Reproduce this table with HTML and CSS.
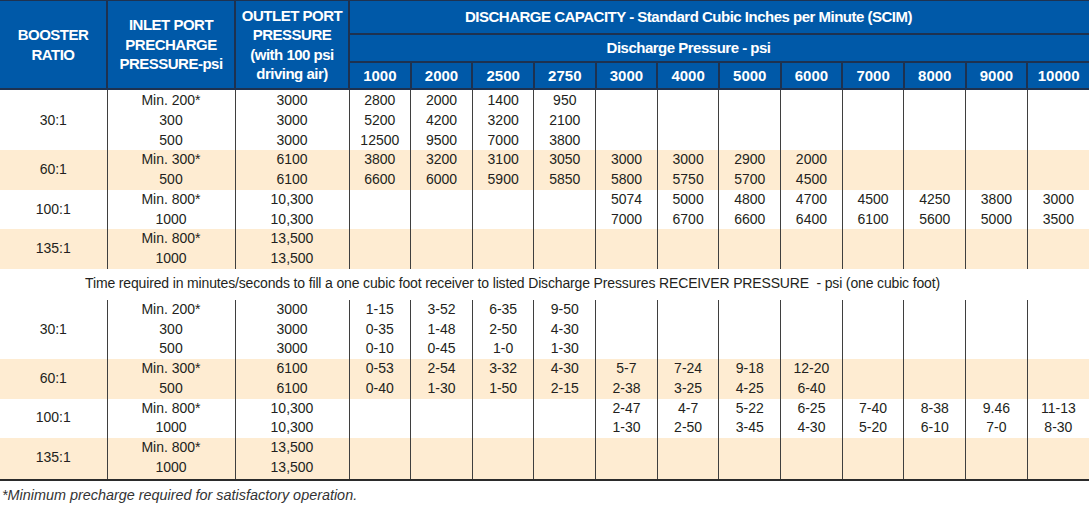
FILE: index.html
```html
<!DOCTYPE html>
<html>
<head>
<meta charset="utf-8">
<link rel="stylesheet" href="styles.css">
</head>
<body>
<table class="spec">
  <colgroup>
    <col class="c-ratio"><col class="c-inlet"><col class="c-outlet">
    <col class="c-p"><col class="c-p"><col class="c-p"><col class="c-p"><col class="c-p"><col class="c-p">
    <col class="c-p"><col class="c-p"><col class="c-p"><col class="c-p"><col class="c-p"><col class="c-p">
  </colgroup>
  <thead>
    <tr class="h1">
      <th rowspan="3" class="first">BOOSTER<br>RATIO</th>
      <th rowspan="3">INLET PORT<br>PRECHARGE<br>PRESSURE-psi</th>
      <th rowspan="3">OUTLET PORT<br>PRESSURE<br>(with 100 psi<br>driving air)</th>
      <th colspan="12" class="span">DISCHARGE CAPACITY - Standard Cubic Inches per Minute (SCIM)</th>
    </tr>
    <tr class="h2">
      <th colspan="12" class="span">Discharge Pressure - psi</th>
    </tr>
    <tr class="h3">
      <th>1000</th><th>2000</th><th>2500</th><th>2750</th><th>3000</th><th>4000</th>
      <th>5000</th><th>6000</th><th>7000</th><th>8000</th><th>9000</th><th>10000</th>
    </tr>
  </thead>
  <tbody>
    <tr class="w top">
      <td class="ratio">30:1</td>
      <td>Min. 200*<br>300<br>500</td>
      <td>3000<br>3000<br>3000</td>
      <td>2800<br>5200<br>12500</td>
      <td>2000<br>4200<br>9500</td>
      <td>1400<br>3200<br>7000</td>
      <td>950<br>2100<br>3800</td>
      <td></td><td></td><td></td><td></td><td></td><td></td><td></td><td></td>
    </tr>
    <tr class="b">
      <td class="ratio">60:1</td>
      <td>Min. 300*<br>500</td>
      <td>6100<br>6100</td>
      <td>3800<br>6600</td>
      <td>3200<br>6000</td>
      <td>3100<br>5900</td>
      <td>3050<br>5850</td>
      <td>3000<br>5800</td>
      <td>3000<br>5750</td>
      <td>2900<br>5700</td>
      <td>2000<br>4500</td>
      <td></td><td></td><td></td><td></td>
    </tr>
    <tr class="w">
      <td class="ratio">100:1</td>
      <td>Min. 800*<br>1000</td>
      <td>10,300<br>10,300</td>
      <td></td><td></td><td></td><td></td>
      <td>5074<br>7000</td>
      <td>5000<br>6700</td>
      <td>4800<br>6600</td>
      <td>4700<br>6400</td>
      <td>4500<br>6100</td>
      <td>4250<br>5600</td>
      <td>3800<br>5000</td>
      <td>3000<br>3500</td>
    </tr>
    <tr class="b">
      <td class="ratio">135:1</td>
      <td>Min. 800*<br>1000</td>
      <td>13,500<br>13,500</td>
      <td></td><td></td><td></td><td></td><td></td><td></td><td></td><td></td><td></td><td></td><td></td><td></td>
    </tr>
    <tr class="caption">
      <td colspan="15">Time required in minutes/seconds to fill a one cubic foot receiver to listed Discharge Pressures RECEIVER PRESSURE&nbsp; - psi (one cubic foot)</td>
    </tr>
    <tr class="w">
      <td class="ratio">30:1</td>
      <td>Min. 200*<br>300<br>500</td>
      <td>3000<br>3000<br>3000</td>
      <td>1-15<br>0-35<br>0-10</td>
      <td>3-52<br>1-48<br>0-45</td>
      <td>6-35<br>2-50<br>1-0</td>
      <td>9-50<br>4-30<br>1-30</td>
      <td></td><td></td><td></td><td></td><td></td><td></td><td></td><td></td>
    </tr>
    <tr class="b">
      <td class="ratio">60:1</td>
      <td>Min. 300*<br>500</td>
      <td>6100<br>6100</td>
      <td>0-53<br>0-40</td>
      <td>2-54<br>1-30</td>
      <td>3-32<br>1-50</td>
      <td>4-30<br>2-15</td>
      <td>5-7<br>2-38</td>
      <td>7-24<br>3-25</td>
      <td>9-18<br>4-25</td>
      <td>12-20<br>6-40</td>
      <td></td><td></td><td></td><td></td>
    </tr>
    <tr class="w">
      <td class="ratio">100:1</td>
      <td>Min. 800*<br>1000</td>
      <td>10,300<br>10,300</td>
      <td></td><td></td><td></td><td></td>
      <td>2-47<br>1-30</td>
      <td>4-7<br>2-50</td>
      <td>5-22<br>3-45</td>
      <td>6-25<br>4-30</td>
      <td>7-40<br>5-20</td>
      <td>8-38<br>6-10</td>
      <td>9.46<br>7-0</td>
      <td>11-13<br>8-30</td>
    </tr>
    <tr class="b last">
      <td class="ratio">135:1</td>
      <td>Min. 800*<br>1000</td>
      <td>13,500<br>13,500</td>
      <td></td><td></td><td></td><td></td><td></td><td></td><td></td><td></td><td></td><td></td><td></td><td></td>
    </tr>
  </tbody>
</table>
<p class="note">*Minimum precharge required for satisfactory operation.</p>
</body>
</html>
```

FILE: styles.css
```css
html, body {
  margin: 0;
  padding: 0;
  background: #ffffff;
}

body {
  font-family: "Liberation Sans", Arial, sans-serif;
  color: #231f20;
}

.spec {
  width: 1089px;
  border-collapse: collapse;
  table-layout: fixed;
}

.c-ratio { width: 107px; }
.c-inlet { width: 128px; }
.c-outlet { width: 114px; }
.c-p { width: 61.667px; }

.spec th {
  background: #0059a8;
  color: #ffffff;
  font-weight: bold;
  font-size: 15px;
  letter-spacing: -0.5px;
  line-height: 19.5px;
  padding: 0;
  text-align: center;
  vertical-align: middle;
  border: 2px solid #1e3250;
  border-top: 1px solid #1e3250;
}

.spec th.first {
  border-left: none;
}

.spec tr.h1 th.span {
  height: 32px;
  padding-right: 62px;
}

.spec tr.h2 th {
  height: 26px;
  padding-right: 62px;
  border-top: 2px solid #1e3250;
}

.spec tr.h3 th {
  height: 25px;
  font-size: 15px;
  letter-spacing: 0;
  border-top: 2px solid #1e3250;
}

.spec tr.h3 th:last-child,
.spec tr.h1 th.span,
.spec tr.h2 th {
  border-right: none;
}

.spec td {
  font-size: 14px;
  line-height: 19.75px;
  padding: 0;
  text-align: center;
  vertical-align: top;
  border-left: 1px solid #3f3f3f;
}

.spec td.ratio {
  border-left: none;
  vertical-align: middle;
}

.spec tr.w td {
  background: #ffffff;
}

.spec tr.b td {
  background: #feecd2;
}

.spec tr.top td {
  padding-top: 1px;
}

.spec tr.caption td {
  border-left: none;
  background: #ffffff;
  height: 31px;
  padding: 0 64px 0 0;
  vertical-align: middle;
  white-space: nowrap;
  letter-spacing: -0.15px;
}

.spec tr.last td {
  padding-bottom: 1px;
  border-bottom: 2px solid #2b2b2b;
}

.note {
  margin: 6px 0 0 2px;
  font-size: 14.4px;
  font-style: italic;
  color: #333333;
  line-height: 16px;
}
```
